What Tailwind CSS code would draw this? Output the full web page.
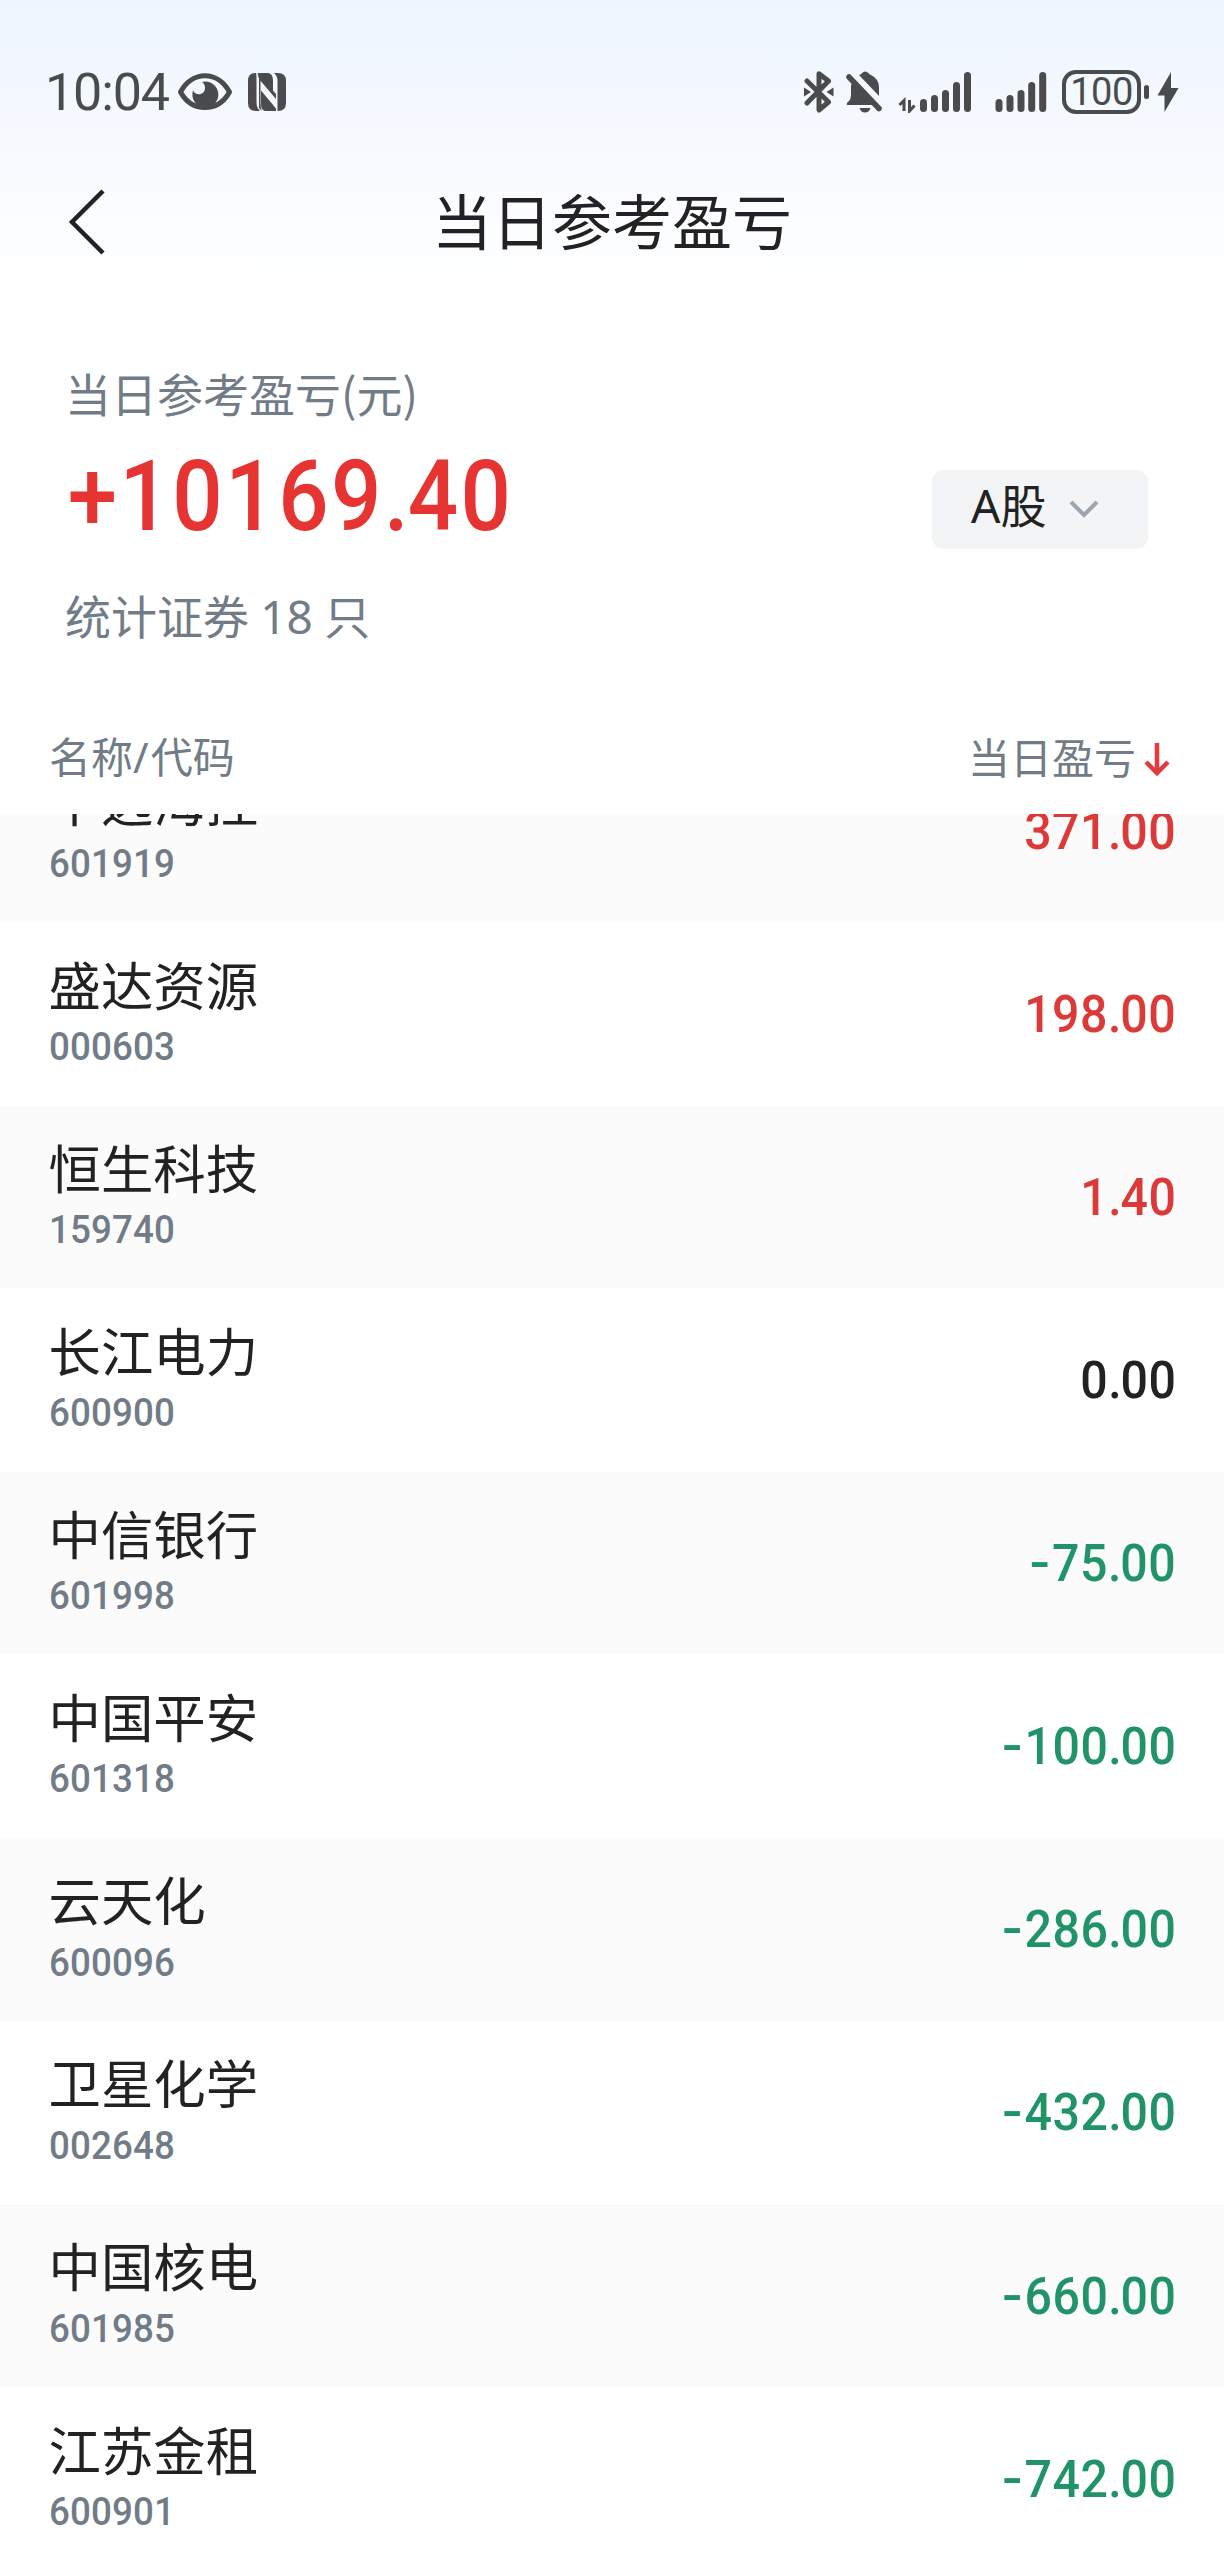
<!DOCTYPE html>
<html lang="zh-CN">
<head>
<meta charset="utf-8">
<title>当日参考盈亏</title>
<script src="https://cdn.jsdelivr.net/npm/@tailwindcss/browser@4"></script>
</head>
<body class="bg-white">
<div class="flex h-[2560px] w-[1224px] flex-col overflow-hidden bg-[linear-gradient(to_bottom,#eef5ff_0px,#ffffff_290px)] font-['Noto_Sans_CJK_SC',sans-serif] text-[#222222]">

  <!-- status bar -->
  <div class="flex h-[184px] shrink-0 items-center pl-[45px] pr-[45px] text-[#4a4b4c]">
    <span class="mt-[2px] w-[133px] whitespace-nowrap font-[Roboto,sans-serif] text-[52px] leading-[60px] tracking-[-1.1px]">10:04</span>
    <svg class="h-[38px] w-[54px]" viewBox="0 0 54 38" fill="none">
      <path d="M2.500 19C8 9 17 2.700 27 2.700S46 9 51.500 19C46 29 37 34.500 27 34.500S8 29 2.500 19Z" stroke="currentColor" stroke-width="5" stroke-linejoin="round"/>
      <path d="M24 9A13 13 0 1 1 15 17.500C19 24.500 27.500 21 27 14.500C26.800 12 26 10 24 9Z" fill="currentColor"/>
    </svg>
    <svg class="ml-4 h-[38px] w-[38px]" viewBox="0 0 38 38">
      <path d="M8 0H7Q0 0 0 8V30Q0 38 8 38H12Q8.500 35 8.500 29V4Q8.500 1 8 0Z" fill="currentColor"/>
      <path d="M9.500 0H20Q25 1 25 7V21L12.500 6.500V31Q12.500 35 14 38L11 35V2Z" fill="currentColor"/>
      <path d="M13 17.500L28 35.500V38H17Q13 37 13 31ZM9.500 0L28 21V26L11 6Z" fill="currentColor"/>
      <path d="M26 0H30Q38 0 38 8V30Q38 38 30 38H29.500V8Q29.500 3 26 0Z" fill="currentColor"/>
    </svg>
    <svg class="ml-[518px] h-[42px] w-[30px]" viewBox="0 0 30 42" fill="none">
      <path d="M3 10L24.500 31L15 39V26M3 32L24.500 10L15 2.800V20" stroke="currentColor" stroke-width="5" stroke-linecap="round" stroke-linejoin="round"/>
      <path d="M0 16.500L7 21L0 25.500ZM29.500 16.500L22.500 21L29.500 25.500Z" fill="currentColor"/>
    </svg>
    <svg class="ml-[12px] h-[42px] w-[36px]" viewBox="0 0 36 42">
      <path d="M13 4Q15.500 3.500 16 2Q19 -1 22.500 2Q23 3.500 25 4Q33 8 33 16V25ZM6 11L28 34H1Q0 32 3 30Q5 28 5 24V15Z" fill="currentColor"/>
      <path d="M3 6L33 37.500" stroke="currentColor" stroke-width="5.500" stroke-linecap="round"/>
      <path d="M13.500 37H24.500Q23 41.500 19 41.500T13.500 37Z" fill="currentColor"/>
    </svg>
    <svg class="ml-4 h-[42px] w-[74px]" viewBox="0 0 74 42" fill="none" stroke="currentColor">
      <path d="M1.500 34L6 29.500V40M11.500 29V40L16.500 34.500" stroke-width="3"/>
      <path d="M25.500 31.500V37.500M36.500 27.500V37.500M47.500 22.500V37.500M58.500 14.500V37.500M69.500 4.500V37.500" stroke-width="7" stroke-linecap="round"/>
    </svg>
    <svg class="ml-[23px] h-[42px] w-[52px]" viewBox="0 0 52 42" fill="none" stroke="currentColor">
      <path d="M4 31.500V37.500M15 27.500V37.500M26 22.500V37.500M36.700 14.500V37.500M47.700 4.500V37.500" stroke-width="7" stroke-linecap="round"/>
    </svg>
    <span class="ml-[15px] flex h-[44px] w-[79px] shrink-0 items-center justify-center rounded-[14px] border-4 border-[#4a4b4c] font-[Roboto,sans-serif] text-[38px] leading-none tracking-[-0.5px]">100</span>
    <span class="ml-[3px] h-[14px] w-[5px] shrink-0 rounded-full bg-[#4a4b4c]"></span>
    <svg class="ml-2 h-[42px] w-[22px] shrink-0" viewBox="0 0 22 42"><path d="M14 1V17H21.500L7.500 41V24.500H0.500Z" fill="currentColor"/></svg>
  </div>

  <!-- title bar -->
  <div class="grid h-[76px] shrink-0 grid-cols-[1fr_auto_1fr] items-center px-[68px]">
    <svg class="h-[66px] w-[38px]" viewBox="0 0 38 66" fill="none"><path d="M35 2L4 33L35 64" stroke="#222222" stroke-width="4.500"/></svg>
    <h1 class="-mt-[6px] text-[60px] leading-[72px]">当日参考盈亏</h1>
  </div>

  <!-- summary -->
  <div class="flex h-[450px] shrink-0 justify-between pl-[65px] pr-[76px] pt-[102px] text-[#717c86]">
    <div class="flex flex-col">
      <p class="text-[46px] leading-[60px]">当日参考盈亏(元)</p>
      <p class="mt-[25px] origin-left scale-x-90 font-[Roboto,sans-serif] text-[98.5px] font-medium leading-[100px] tracking-[2.8px] text-[#e63432]"><span class="ml-[3px]">+10169</span><span class="tracking-[-1px]">.</span>40</p>
      <p class="mt-[37px] text-[46px] leading-[60px]">统计证券 <span class="ml-px mr-px font-['Noto_Sans',sans-serif]">18</span> 只</p>
    </div>
    <button class="mt-[108px] flex h-[79px] w-[216px] items-center rounded-xl bg-[#f3f4f6] pl-[39px] text-[46px] leading-[60px] text-[#222222]">
      <span class="-mt-[12px] whitespace-nowrap"><span class="font-['Noto_Sans',sans-serif]">A</span>股</span>
      <svg class="ml-[23px] h-[20px] w-[30px]" viewBox="0 0 30 20" fill="none"><path d="M2 2L15 15L28 2" stroke="#9ca5ae" stroke-width="4"/></svg>
    </button>
  </div>

  <!-- column headings -->
  <div class="flex h-[104px] shrink-0 items-center justify-between pb-[4px] pl-[49px] pr-[54px] text-[42px] leading-[50px] text-[#717c86]">
    <span class="-mt-[8px]">名称<span class="font-['Noto_Sans',sans-serif] tracking-[2px]">/</span>代码</span>
    <span class="flex items-center"><span class="-mt-[8px]">当日盈亏</span>
      <svg class="ml-[8px] h-[34px] w-[26px]" viewBox="0 0 26 34" fill="none"><path d="M13 0V29M2 19L13 30L24 19" stroke="#e23b39" stroke-width="4.500"/></svg>
    </span>
  </div>

  <!-- holdings, scrolled part-way through the first row -->
  <div id="list" class="min-h-0 flex-1 overflow-hidden"><div id="rows" class="-mt-[75px]"></div></div>
</div>
<script>
const data = [
  ['中远海控','601919','371.00'],['盛达资源','000603','198.00'],['恒生科技','159740','1.40'],
  ['长江电力','600900','0.00'],['中信银行','601998','-75.00'],['中国平安','601318','-100.00'],
  ['云天化','600096','-286.00'],['卫星化学','002648','-432.00'],['中国核电','601985','-660.00'],
  ['江苏金租','600901','-742.00']];
document.getElementById('rows').innerHTML = data.map(([name, code, v]) => {
  const n = parseFloat(v);
  const color = n > 0 ? 'text-[#dc3a39]' : n < 0 ? 'text-[#209368]' : 'text-[#222222]';
  const [whole, cents] = v.replace('-', '').split('.');
  const sign = n < 0 ? '<span class="mr-[4px] inline-block -translate-y-px scale-x-[1.25]">-</span>' : '';
  const amount = `${sign}${whole}<span class="tracking-[-1.2px]">.</span>${cents}`;
  return `<div class="flex h-[183.14px] justify-between pl-[48.5px] pr-[47.5px] odd:bg-[#fbfbfc] even:bg-white">
    <div class="flex flex-col gap-[12.4px] pt-[30.4px]">
      <span class="text-[52.4px] leading-[60px]">${name}</span>
      <span class="origin-left scale-x-[0.93] font-[Roboto,sans-serif] text-[39.5px] leading-[44px] font-medium tracking-[0.15px] text-[#717c86]">${code}</span>
    </div>
    <span class="origin-right scale-x-[0.92] self-center whitespace-nowrap font-[Roboto,sans-serif] text-[52.5px] leading-[60px] font-medium tracking-[0.5px] ${color}">${amount}</span>
  </div>`;
}).join('');
</script>
</body>
</html>
